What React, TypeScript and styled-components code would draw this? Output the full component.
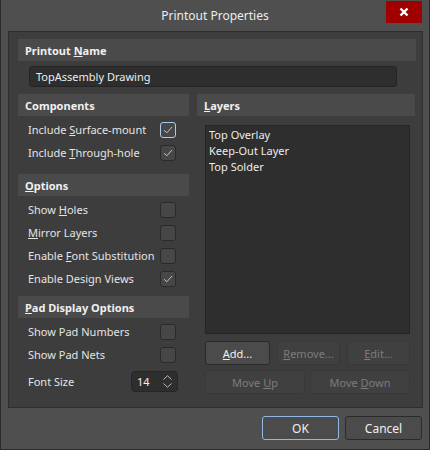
import React from 'react';
import styled, { createGlobalStyle, css } from 'styled-components';

const GlobalStyle = createGlobalStyle`
  html, body {
    margin: 0;
    padding: 0;
    background: #4f4f4f;
  }
  body {
    font-family: "Noto Sans", "Open Sans", sans-serif;
    font-size: 11px;
    color: #e4e4e4;
  }
`;

const Window = styled.div`
  width: 430px;
  height: 450px;
  box-sizing: border-box;
  background: #4f4f4f;
  border-left: 1px solid #2b2b2b;
  border-right: 1px solid #2b2b2b;
  border-bottom: 1px solid #2b2b2b;
  display: flex;
  flex-direction: column;
`;

const TitleBar = styled.div`
  position: relative;
  height: 31px;
  display: flex;
  align-items: center;
  justify-content: center;
  font-size: 12px;
  color: #ececec;
  padding-bottom: 1px;
  box-sizing: border-box;
`;

const CloseButton = styled.div`
  position: absolute;
  top: 1px;
  right: 7px;
  width: 36px;
  height: 22px;
  background: #a10000;
  display: flex;
  align-items: center;
  justify-content: center;
`;

const Panel = styled.div`
  margin: 0 6px 0 7px;
  height: 377px;
  box-sizing: border-box;
  background: #3d3d3d;
  border: 1px solid #2e2e2e;
  padding: 7px 6px 0 9px;
  display: flex;
  flex-direction: column;
`;

const Header = styled.div`
  height: 22px;
  background: #4a4a4a;
  display: flex;
  align-items: center;
  padding-left: 7px;
  font-weight: 700;
  color: #f0f0f0;
`;

const NameInput = styled.div`
  margin: 5px 19px 0 11px;
  height: 21px;
  box-sizing: border-box;
  background: #2e2e2e;
  border: 1px solid #242424;
  border-radius: 3px;
  padding-left: 6px;
  display: flex;
  align-items: center;
  color: #ececec;
`;

const Columns = styled.div`
  margin-top: 7px;
  display: grid;
  grid-template-columns: 171px 218px;
  column-gap: 8px;
`;

const Column = styled.div`
  display: flex;
  flex-direction: column;
`;

const Group = styled.div<{ $top?: number; $pad?: number }>`
  margin-top: ${(p) => p.$top ?? 0}px;
  padding-top: ${(p) => p.$pad ?? 2}px;
  display: flex;
  flex-direction: column;
`;

const Row = styled.div`
  height: 23px;
  display: flex;
  align-items: center;
  justify-content: space-between;
  padding: 0 13px 0 10px;
  white-space: nowrap;
`;

const Check = styled.div<{ $focus?: boolean }>`
  width: 16px;
  height: 16px;
  box-sizing: border-box;
  flex: none;
  border-radius: 3px;
  background: #474747;
  border: 1px solid ${(p) => (p.$focus ? '#a9c9ee' : '#2a2a2a')};
  display: flex;
  align-items: center;
  justify-content: center;
`;

const FontRow = styled(Row)`
  margin-top: 5px;
  height: 21px;
  padding-right: 11px;
`;

const Spin = styled.div`
  width: 47px;
  height: 21px;
  box-sizing: border-box;
  background: #2e2e2e;
  border: 1px solid #262626;
  border-radius: 4px;
  display: flex;
  align-items: center;
  justify-content: space-between;
  padding: 0 5px 0 5px;
  color: #f0f0f0;
`;

const SpinArrows = styled.div`
  display: flex;
  flex-direction: column;
  gap: 3px;
`;

const LayerList = styled.div`
  margin: 9px 5px 0 8px;
  height: 209px;
  box-sizing: border-box;
  background: #2e2e2e;
  border: 1px solid #252525;
  padding: 1px 0 0 3px;
  display: flex;
  flex-direction: column;
`;

const LayerItem = styled.div`
  height: 16px;
  line-height: 16px;
  color: #ececec;
`;

const ButtonRow = styled.div<{ $cols: string; $top: number }>`
  margin: ${(p) => p.$top}px 5px 0 8px;
  display: grid;
  grid-template-columns: ${(p) => p.$cols};
  justify-content: space-between;
`;

const Button = styled.div<{ $disabled?: boolean; $focus?: boolean }>`
  height: 24px;
  box-sizing: border-box;
  border-radius: 3px;
  display: flex;
  align-items: center;
  justify-content: center;
  ${(p) =>
    p.$disabled
      ? css`
          background: #404040;
          border: 1px solid #393939;
          color: #7c7c7c;
        `
      : css`
          background: #4b4b4b;
          border: 1px solid ${p.$focus ? '#8fb8e4' : '#2a2a2a'};
          color: #f0f0f0;
        `}
`;

const Footer = styled.div`
  display: flex;
  justify-content: flex-end;
  gap: 6px;
  padding: 8px 7px 0 0;
`;

const FooterButton = styled(Button)`
  width: 77px;
  font-size: 12px;
`;

const Tick = () => (
  <svg width="10" height="8" viewBox="0 0 10 8">
    <path d="M1 4.2 L3.8 6.8 L9 1" fill="none" stroke="#c4c4c4" strokeWidth="1" />
  </svg>
);

const CheckRow = ({ label, checked, focus }: { label: React.ReactNode; checked?: boolean; focus?: boolean }) => (
  <Row>
    <span>{label}</span>
    <Check $focus={focus}>{checked && <Tick />}</Check>
  </Row>
);

export default function App() {
  return (
    <>
      <GlobalStyle />
      <Window>
        <TitleBar>
          Printout Properties
          <CloseButton>
            <svg width="10" height="10" viewBox="0 0 10 10">
              <path d="M1.5 1.5 L8.5 8.5 M8.5 1.5 L1.5 8.5" stroke="#fff" strokeWidth="2.4" />
            </svg>
          </CloseButton>
        </TitleBar>
        <Panel>
          <Header>
            Printout&nbsp;<u>N</u>ame
          </Header>
          <NameInput>TopAssembly Drawing</NameInput>
          <Columns>
            <Column>
              <Header>Components</Header>
              <Group>
                <CheckRow label={<>Include <u>S</u>urface-mount</>} checked focus />
                <CheckRow label={<>Include <u>T</u>hrough-hole</>} checked />
              </Group>
              <Group $top={10} $pad={0}>
                <Header>
                  <u>O</u>ptions
                </Header>
              </Group>
              <Group>
                <CheckRow label={<>Show <u>H</u>oles</>} />
                <CheckRow label={<><u>M</u>irror Layers</>} />
                <CheckRow label={<>Enable <u>F</u>ont Substitution</>} />
                <CheckRow label="Enable Design Views" checked />
              </Group>
              <Group $top={6} $pad={0}>
                <Header>
                  <u>P</u>ad Display Options
                </Header>
              </Group>
              <Group>
                <CheckRow label="Show Pad Numbers" />
                <CheckRow label="Show Pad Nets" />
                <FontRow>
                  <span>Font Size</span>
                  <Spin>
                    <span>14</span>
                    <SpinArrows>
                      <svg width="9" height="5" viewBox="0 0 9 5">
                        <path d="M0.5 4.5 L4.5 0.8 L8.5 4.5" fill="none" stroke="#bdbdbd" strokeWidth="1" />
                      </svg>
                      <svg width="9" height="5" viewBox="0 0 9 5">
                        <path d="M0.5 0.5 L4.5 4.2 L8.5 0.5" fill="none" stroke="#bdbdbd" strokeWidth="1" />
                      </svg>
                    </SpinArrows>
                  </Spin>
                </FontRow>
              </Group>
            </Column>
            <Column>
              <Header>
                <u>L</u>ayers
              </Header>
              <LayerList>
                <LayerItem>Top Overlay</LayerItem>
                <LayerItem>Keep-Out Layer</LayerItem>
                <LayerItem>Top Solder</LayerItem>
              </LayerList>
              <ButtonRow $cols="65px 63px 63px" $top={7}>
                <Button>
                  <u>A</u>dd...
                </Button>
                <Button $disabled>
                  <u>R</u>emove...
                </Button>
                <Button $disabled>
                  <u>E</u>dit...
                </Button>
              </ButtonRow>
              <ButtonRow $cols="100px 100px" $top={5}>
                <Button $disabled>
                  Move&nbsp;<u>U</u>p
                </Button>
                <Button $disabled>
                  Move&nbsp;<u>D</u>own
                </Button>
              </ButtonRow>
            </Column>
          </Columns>
        </Panel>
        <Footer>
          <FooterButton $focus>OK</FooterButton>
          <FooterButton>Cancel</FooterButton>
        </Footer>
      </Window>
    </>
  );
}
